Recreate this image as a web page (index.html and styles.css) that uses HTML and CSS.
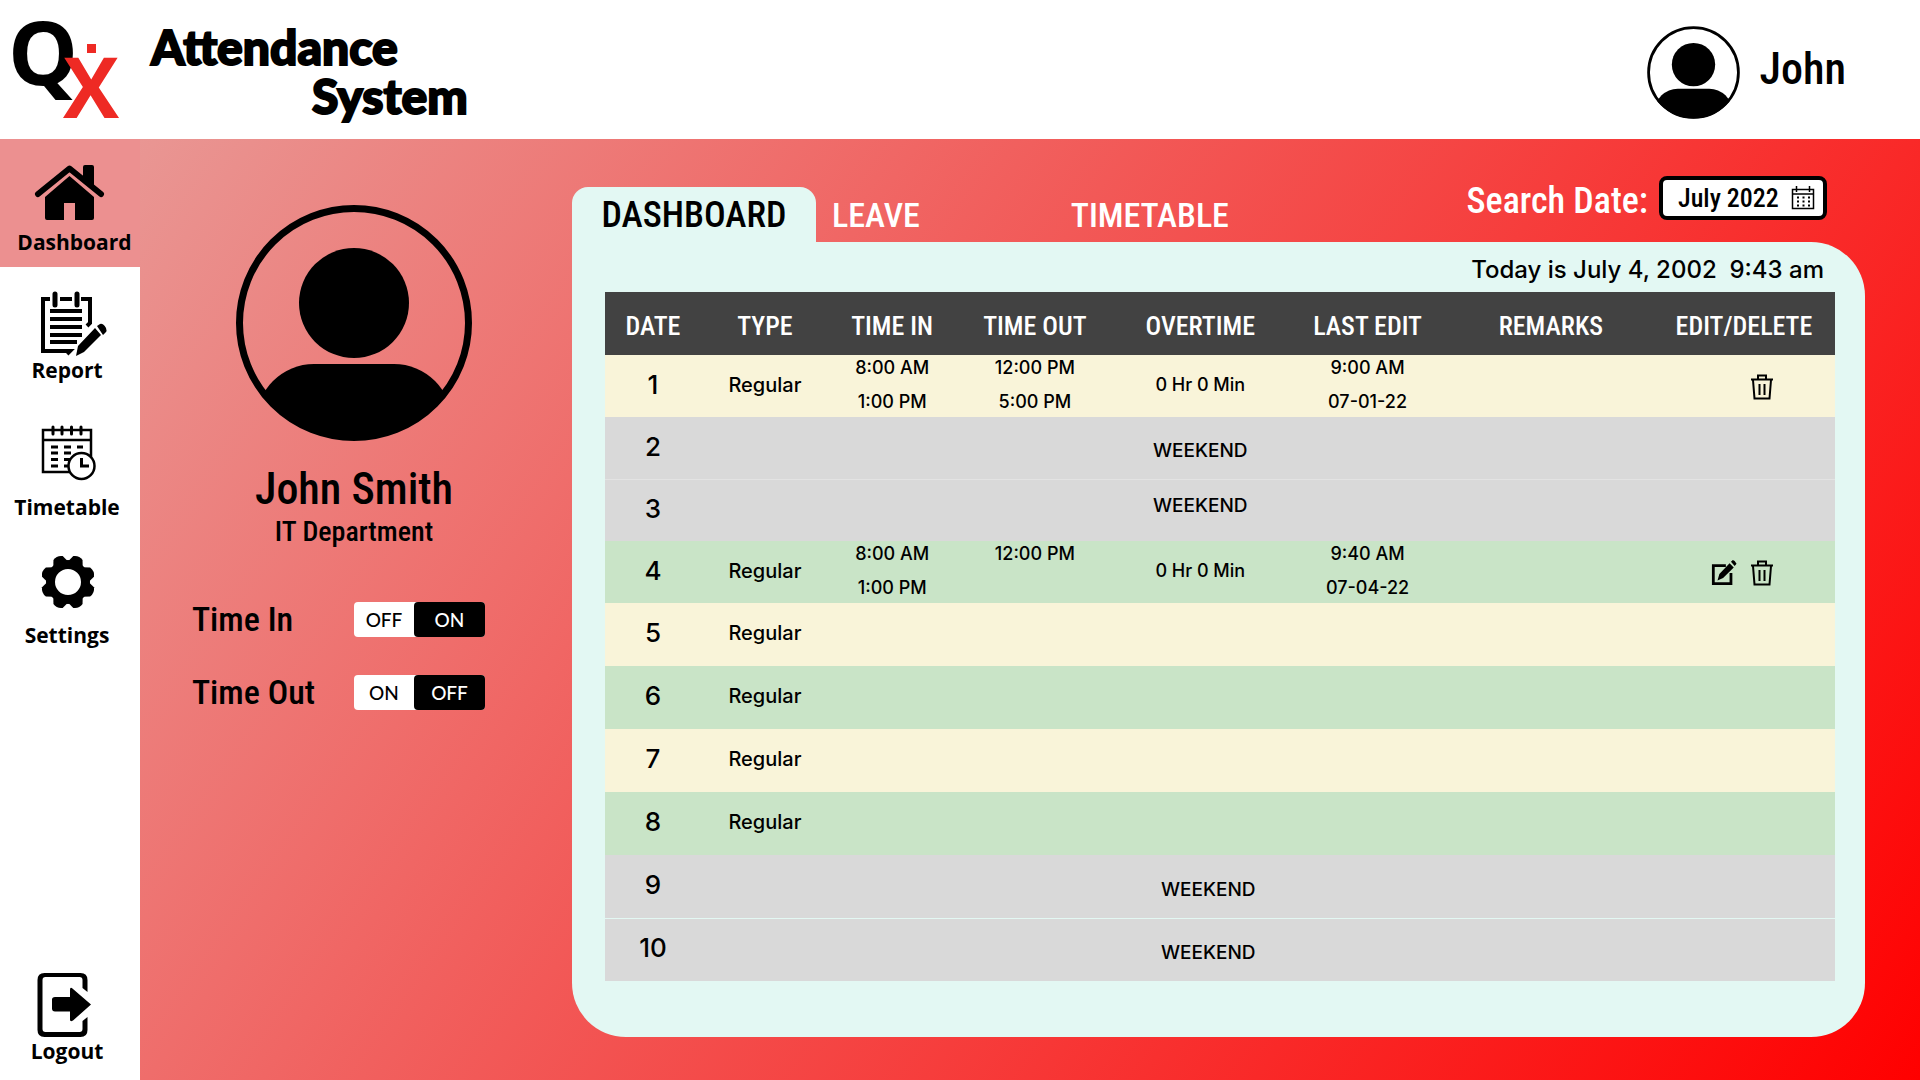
FILE: index.html
```html
<!DOCTYPE html>
<html lang="en">
<head>
<meta charset="utf-8">
<meta name="viewport" content="width=device-width, initial-scale=1">
<title>QX Attendance System</title>
<link rel="stylesheet" href="styles.css">
</head>
<body>
<svg class="defs" aria-hidden="true">
  <symbol id="trash" viewBox="0 0 24 26"><path d="M1 5.500h22M8 5V1.500h8V5M3 6l1.500 18.500h15L21 6M9.500 10v11M14.500 10v11" fill="none" stroke="#000" stroke-width="2"/></symbol>
</svg>
<header class="topbar">
  <svg class="logo" viewBox="0 0 120 120" role="img" aria-label="QX">
    <text class="logo-q" x="8" y="85">Q</text>
    <text class="logo-x" x="63" y="118">X</text>
    <path d="M87 44h9v9h-9z" fill="#ee2a24"/>
  </svg>
  <h1 class="title"><span>Attendance</span><span class="title-second">System</span></h1>
  <div class="user">
    <svg class="user-avatar" viewBox="0 0 236 236" aria-hidden="true">
      <clipPath id="ring"><circle cx="118" cy="118" r="117"/></clipPath>
      <circle cx="118" cy="118" r="114" fill="none" stroke="#000" stroke-width="7"/>
      <circle cx="118" cy="98" r="55"/>
      <rect x="20" y="159" width="196" height="120" rx="58" clip-path="url(#ring)"/>
    </svg>
    <span class="user-name">John</span>
  </div>
</header>
<div class="body">
  <nav class="sidebar" aria-label="Main">
    <a class="nav-item active" href="#dashboard">
      <svg viewBox="0 161 140 68" aria-hidden="true"><path d="M38 195 69.500 169.500 101 195" fill="none" stroke="#000" stroke-width="6" stroke-linecap="round" stroke-linejoin="round"/><path d="M83 178v-10q0-2 2-2h7q2 0 2 2v19zM45 198l24.500-21L94 198v21q0 2-2 2H75v-17H64v17H47q-2 0-2-2z"/></svg>
      <span>Dashboard</span>
    </a>
    <a class="nav-item" href="#report">
      <svg viewBox="0 287 140 68" aria-hidden="true"><path d="M50 298h-7v52h27l-3 3M60 298h12M81 298h9v24l-3 3" fill="none" stroke="#000" stroke-width="4"/><path d="M55 293v11M77 293v11" stroke="#000" stroke-width="5" stroke-linecap="round"/><path d="M50 310h32M50 318h32M50 326h32M50 334h32M50 341h27" stroke="#000" stroke-width="4"/><path d="m76 355 2-10 17-18 6 7-17 17zM97 325l3-2q3-1 6 4 1 3 0 4l-3 3z"/></svg>
      <span>Report</span>
    </a>
    <a class="nav-item timetable" href="#timetable">
      <svg viewBox="0 426 140 68" aria-hidden="true"><g fill="none" stroke="#000" stroke-width="2.500"><path d="M43 431h48v42H43zM43 441h48"/><path d="M53 428v7M62 428v7M71.500 428v7M81 428v7" stroke-width="3" stroke-linecap="round"/><path d="M51 448h7M64 448h7M77 448h6M51 454h7M64 454h7M51 460.500h7M64 460.500h7M51 467h7M64 467h7" stroke-width="3"/><circle cx="81.500" cy="467" r="13" fill="#fff"/><path d="M81.500 459v8H89" stroke-width="3"/></g></svg>
      <span>Timetable</span>
    </a>
    <a class="nav-item" href="#settings">
      <svg viewBox="0 554 140 68" aria-hidden="true"><g transform="translate(68 583)"><circle r="17.500" fill="none" stroke="#000" stroke-width="9"/><g id="teeth"><path id="t" d="m-8-19 3-7q5-3 10 0l3 7z" transform="rotate(22.500)"/><use href="#t" transform="rotate(45)"/><use href="#t" transform="rotate(90)"/><use href="#t" transform="rotate(135)"/></g><use href="#teeth" transform="rotate(180)"/></g></svg>
      <span>Settings</span>
    </a>
    <a class="nav-item logout" href="#logout">
      <svg viewBox="0 969 140 68" aria-hidden="true"><path d="M87.500 992l-5-4v-8q0-3-3-3h-34q-3 0-3 3v49q0 3 3 3h34q3 0 3-3v-8l5-4v13q0 7-7 7H44.500q-7 0-7-7v-50q0-7 7-7h36q7 0 7 7z"/><path d="M55 997h15v-7q0-4 3-1l18 15.500-18 16q-3 2-3-1v-8H55q-3 0-3-3v-9q0-2.500 3-2.500z"/></svg>
      <span>Logout</span>
    </a>
  </nav>
  <main class="content">
    <section class="profile">
      <svg class="profile-avatar" viewBox="0 0 236 236" aria-hidden="true">
        <circle cx="118" cy="118" r="114.500" fill="none" stroke="#000" stroke-width="7"/>
        <circle cx="118" cy="98" r="55"/>
        <rect x="20" y="159" width="196" height="120" rx="58" clip-path="url(#ring)"/>
      </svg>
      <h2 class="profile-name">John Smith</h2>
      <p class="profile-dept">IT Department</p>
      <div class="clock">
        <div class="clock-row"><span id="in">Time In</span><div class="toggle" role="group" aria-labelledby="in"><button type="button">OFF</button><button type="button" class="on" aria-pressed="true">ON</button></div></div>
        <div class="clock-row"><span id="out">Time Out</span><div class="toggle" role="group" aria-labelledby="out"><button type="button">ON</button><button type="button" class="on" aria-pressed="true">OFF</button></div></div>
      </div>
    </section>
    <section class="board">
      <div class="board-top">
        <div class="tabs" role="tablist">
          <button type="button" role="tab" class="tab selected" aria-selected="true">DASHBOARD</button>
          <button type="button" role="tab" class="tab tab-leave">LEAVE</button>
          <button type="button" role="tab" class="tab">TIMETABLE</button>
        </div>
        <div class="search">
          <label for="month">Search Date:</label>
          <div class="month-box">
            <input id="month" type="text" value="July 2022">
            <svg viewBox="0 0 24 24" aria-hidden="true"><path d="M1.500 3.500h21v19h-21zM1.500 8h21M5.500 0v6M18.500 0v6" fill="none" stroke="#000" stroke-width="1.500"/><path d="M6 11.500h13M6 15.500h13M6 19.500h13" stroke="#000" stroke-width="2" stroke-dasharray="2 3.500"/></svg>
          </div>
        </div>
      </div>
      <div class="panel">
        <p class="today">Today is July 4, 2002&nbsp; 9:43 am</p>
        <table class="log">
          <colgroup><col class="c-date"><col class="c-type"><col class="c-in"><col class="c-out"><col class="c-over"><col class="c-last"><col class="c-rem"><col class="c-edit"></colgroup>
          <thead><tr><th>DATE</th><th>TYPE</th><th>TIME IN</th><th>TIME OUT</th><th>OVERTIME</th><th>LAST EDIT</th><th>REMARKS</th><th>EDIT/DELETE</th></tr></thead>
          <tbody>
            <tr class="cream"><td class="day">1</td><td class="type">Regular</td><td><div class="pair"><span>8:00 AM</span><span>1:00 PM</span></div></td><td><div class="pair"><span>12:00 PM</span><span>5:00 PM</span></div></td><td>0 Hr 0 Min</td><td><div class="pair"><span>9:00 AM</span><span>07-01-22</span></div></td><td></td><td><div class="actions"><button type="button" aria-label="Delete"><svg><use href="#trash"/></svg></button></div></td></tr>
            <tr class="gray"><td class="day">2</td><td></td><td></td><td></td><td class="weekend">WEEKEND</td><td></td><td></td><td></td></tr>
            <tr class="gray line"><td class="day">3</td><td></td><td></td><td></td><td class="weekend upper">WEEKEND</td><td></td><td></td><td></td></tr>
            <tr class="green"><td class="day">4</td><td class="type">Regular</td><td><div class="pair"><span>8:00 AM</span><span>1:00 PM</span></div></td><td><div class="pair"><span>12:00 PM</span></div></td><td>0 Hr 0 Min</td><td><div class="pair"><span>9:40 AM</span><span>07-04-22</span></div></td><td></td><td><div class="actions"><button type="button" aria-label="Edit"><svg viewBox="0 0 28 28"><path d="M16 6H2.500v19.500h19V14" fill="none" stroke="#000" stroke-width="3"/><path d="m7 22 2-7L20 3.500l4.500 4.500L13 19.500zM21.500 2l2-2q2 0 4 4l-2 2.500z"/></svg></button><button type="button" aria-label="Delete"><svg><use href="#trash"/></svg></button></div></td></tr>
            <tr class="cream tall"><td class="day">5</td><td class="type">Regular</td><td></td><td></td><td></td><td></td><td></td><td></td></tr>
            <tr class="green tall"><td class="day">6</td><td class="type">Regular</td><td></td><td></td><td></td><td></td><td></td><td></td></tr>
            <tr class="cream tall"><td class="day">7</td><td class="type">Regular</td><td></td><td></td><td></td><td></td><td></td><td></td></tr>
            <tr class="green tall"><td class="day">8</td><td class="type">Regular</td><td></td><td></td><td></td><td></td><td></td><td></td></tr>
            <tr class="gray tall"><td class="day">9</td><td></td><td></td><td></td><td class="weekend late">WEEKEND</td><td></td><td></td><td></td></tr>
            <tr class="gray tall line bright"><td class="day">10</td><td></td><td></td><td></td><td class="weekend late">WEEKEND</td><td></td><td></td><td></td></tr>
          </tbody>
        </table>
      </div>
    </section>
  </main>
</div>
</body>
</html>
```
FILE: styles.css
```css
* { box-sizing: border-box; }
body {
  --narrow: "Roboto Condensed", "Liberation Sans Narrow", "Liberation Sans", sans-serif;
  margin: 0;
  min-height: 100vh;
  display: flex;
  flex-direction: column;
  background: #fff;
  color: #000;
  font-family: Inter, sans-serif;
  font-weight: 500;
}
h1, h2, p { margin: 0; }
button { padding: 0; border: 0; background: none; color: inherit; font: inherit; }
.defs { display: none; }

.topbar { display: flex; height: 139px; }
.logo { width: 120px; height: 120px; flex: none; overflow: visible; }
.logo-q, .logo-x { font-family: "Open Sans", sans-serif; font-weight: 700; }
.logo-q { font-size: 88px; }
.logo-x { font-size: 84px; fill: #ee2a24; }
.title {
  display: flex;
  flex-direction: column;
  padding: 22px 0 0 31px;
  font: 900 48px/49px Lato, sans-serif;
  -webkit-text-stroke: 2px #000;
}
.title-second { padding-left: 161px; }
.user { display: flex; align-items: flex-start; gap: 20px; margin-left: auto; padding: 26px 74px 0 0; }
.user-avatar { width: 93px; height: 93px; }
.user-name { font: 500 44px/52px var(--narrow); padding-top: 17px; }

.body { display: flex; flex: 1; }
.sidebar { display: flex; flex-direction: column; width: 140px; flex: none; padding-bottom: 4px; }
.nav-item {
  display: flex;
  flex-direction: column;
  padding: 21px 0 11px;
  color: #000;
  font: 700 21px/28px "Open Sans", sans-serif;
  text-align: center;
  text-decoration: none;
}
.nav-item svg { width: 140px; height: 68px; }
.nav-item span { padding-right: 6px; }
.nav-item.active { background: #ec9090; }
.nav-item.active span { padding: 0 0 0 9px; }
.timetable { margin-top: 9px; }
.logout { margin-top: auto; }

.content { display: flex; flex: 1; min-width: 0; padding-right: 55px; background: linear-gradient(125deg, #e99693, #f00); }
.profile { display: flex; flex-direction: column; align-items: center; width: 432px; flex: none; padding: 66px 4px 0 0; }
.profile-avatar { width: 236px; height: 236px; }
.profile-name { margin-top: 22px; font: 500 44px/52px var(--narrow); }
.profile-dept { font: 500 28px/34px var(--narrow); }
.clock { display: flex; flex-direction: column; align-self: flex-start; gap: 37px; width: 293px; margin: 52px 0 0 52px; }
.clock-row { display: flex; align-items: center; justify-content: space-between; font: 500 34px/36px var(--narrow); }
.toggle { display: flex; width: 131px; height: 35px; border-radius: 4px; background: #fff; font: 500 19px/35px Lato, sans-serif; }
.toggle button { flex: 1; }
.toggle .on { flex: none; width: 71px; border-radius: 4px; background: #000; color: #fff; }

.board { flex: 1; min-width: 0; padding: 37px 0 43px; }
.board-top { display: flex; align-items: flex-start; justify-content: space-between; height: 66px; color: #fff; }
.tabs { display: flex; padding-top: 11px; }
.tab { height: 55px; padding: 0 16px; font: 500 34px/57px var(--narrow); }
.tab.selected { width: 244px; padding: 0; border-radius: 16px 16px 0 0; background: #e3f8f3; color: #000; font-size: 36px; }
.tab-leave { margin-right: 119px; }
.search { display: flex; gap: 11px; padding-right: 38px; font: 500 36px/50px var(--narrow); }
.month-box { display: flex; align-items: center; width: 168px; height: 44px; padding-right: 8px; border: 4px solid #000; border-radius: 8px; background: #fff; }
.month-box input { flex: 1; min-width: 0; padding: 0 0 0 15px; border: 0; background: none; font: 500 26px/32px var(--narrow); }
.month-box svg { width: 24px; height: 24px; flex: none; }

.panel { min-height: 794px; padding: 12px 30px 56px 33px; border-radius: 0 54px 54px 54px; background: #e3f8f3; }
.today { padding-right: 11px; font-size: 24px; line-height: 32px; text-align: right; }
.log { width: 100%; margin-top: 6px; border-collapse: collapse; table-layout: fixed; font-size: 18px; text-align: center; }
.c-date { width: 7.8%; }
.c-type { width: 10.4%; }
.c-in { width: 10.3%; }
.c-out { width: 12.9%; }
.c-over { width: 14%; }
.c-last { width: 13.2%; }
.c-rem { width: 16.6%; }
.c-edit { width: 14.8%; }
.log thead tr { height: 63px; background: #424242; color: #fff; }
.log th { padding: 4px 0 0; font: 500 26px/32px var(--narrow); }
.log tbody tr { height: 62px; }
.log tbody .tall { height: 63px; }
.log td { padding: 0 0 3px; line-height: 22px; }
.log .day { font-size: 26px; }
.log .type { font-size: 20px; }
.log .weekend { padding: 6px 0 0; font-size: 19px; }
.log .upper { padding: 0 0 8px; }
.log .late { padding-left: 16px; }
.cream { background: #f9f4d9; }
.gray { background: #d9d9d9; }
.green { background: #c9e4c7; }
.line { box-shadow: inset 0 1px #e3e3e3; }
.bright { box-shadow: inset 0 1px #e3f8f3; }
.pair { display: flex; flex-direction: column; gap: 12px; height: 56px; }
.actions { display: flex; align-items: center; justify-content: flex-end; gap: 12px; padding: 4px 60px 0 0; }
.actions button, .actions svg { display: block; height: 26px; }
.actions svg { width: 26px; }
```
